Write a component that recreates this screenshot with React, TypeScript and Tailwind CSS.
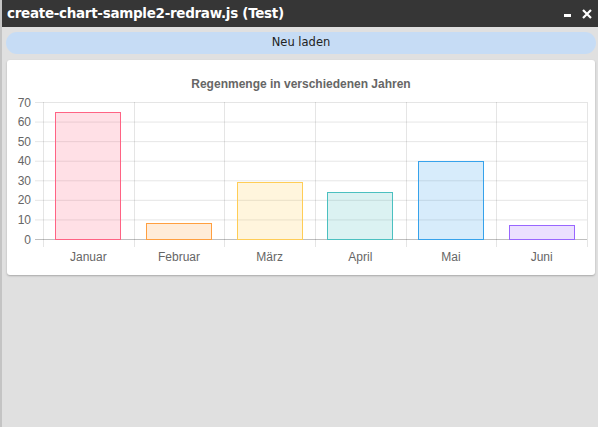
import React from "react";

const data = [
  { label: "Januar", value: 65, fill: "rgba(255,99,132,0.2)", stroke: "rgb(255,99,132)" },
  { label: "Februar", value: 8, fill: "rgba(255,159,64,0.2)", stroke: "rgb(255,159,64)" },
  { label: "März", value: 29, fill: "rgba(255,205,86,0.2)", stroke: "rgb(255,205,86)" },
  { label: "April", value: 24, fill: "rgba(75,192,192,0.2)", stroke: "rgb(75,192,192)" },
  { label: "Mai", value: 40, fill: "rgba(54,162,235,0.2)", stroke: "rgb(54,162,235)" },
  { label: "Juni", value: 7, fill: "rgba(153,102,255,0.2)", stroke: "rgb(153,102,255)" },
];

const LEFT = 36;
const RIGHT = 580;
const TOP = 42;
const BOTTOM = 179;
const MAX = 70;

const BarChart = () => {
  const cat = (RIGHT - LEFT) / data.length;
  const yOf = (v: number) => BOTTOM - (v / MAX) * (BOTTOM - TOP);
  const ticks = [0, 10, 20, 30, 40, 50, 60, 70];
  const barW = cat * 0.72;

  return (
    <svg width="588" height="215" className="block" style={{ fontFamily: '"Liberation Sans", Arial, sans-serif' }}>
      <text x="294" y="28" textAnchor="middle" fontSize="12" fontWeight="bold" fill="#666">
        Regenmenge in verschiedenen Jahren
      </text>

      {/* horizontal grid */}
      {ticks.map((t) => (
        <g key={t}>
          <line
            x1={LEFT - 8}
            x2={RIGHT}
            y1={yOf(t) + 0.5}
            y2={yOf(t) + 0.5}
            stroke={t === 0 ? "rgba(0,0,0,0.25)" : "rgba(0,0,0,0.1)"}
          />
          <text x={LEFT - 12} y={yOf(t) + 4.5} textAnchor="end" fontSize="12" fill="#666">
            {t}
          </text>
        </g>
      ))}

      {/* vertical grid */}
      {Array.from({ length: data.length + 1 }).map((_, i) => {
        const x = Math.round(LEFT + i * cat) + 0.5;
        return <line key={i} x1={x} x2={x} y1={TOP} y2={BOTTOM + 8} stroke="rgba(0,0,0,0.1)" />;
      })}

      {/* bars */}
      {data.map((d, i) => {
        const cx = LEFT + i * cat + cat / 2;
        const x = Math.floor(cx - barW / 2) + 0.5;
        const y = Math.round(yOf(d.value)) + 0.5;
        return (
          <g key={d.label}>
            <rect x={x} y={y} width={Math.round(barW)} height={BOTTOM - y + 0.5} fill={d.fill} stroke={d.stroke} />
            <text x={cx} y={201} textAnchor="middle" fontSize="12" fill="#666">
              {d.label}
            </text>
          </g>
        );
      })}
    </svg>
  );
};

export default function App() {
  return (
    <div className="w-[598px] h-[427px] bg-[#e0e0e0] flex flex-col border-l-2 border-[#c4c4c4] overflow-hidden">
      {/* title bar */}
      <div className="h-[27px] bg-[#363636] flex items-center justify-between pl-[7px] pr-[6px] -ml-[2px]">
        <span className="text-white font-bold text-[13.5px] font-['DejaVu_Sans',sans-serif] tracking-[-0.3px]">
          create-chart-sample2-redraw.js (Test)
        </span>
        <div className="flex items-center gap-[10px]">
          <svg width="8" height="8" viewBox="0 0 8 8">
            <rect x="0" y="4" width="7" height="3" fill="#fff" />
          </svg>
          <svg width="10" height="10" viewBox="0 0 10 10">
            <path d="M1 1 L9 9 M9 1 L1 9" stroke="#fff" strokeWidth="2.2" />
          </svg>
        </div>
      </div>

      <div className="flex flex-col pl-[4px] pr-[2px] pt-[5px]">
        <button
          type="button"
          className="h-[22px] w-full rounded-full bg-[#c6dcf5] text-[11.5px] text-[#222] font-['DejaVu_Sans',sans-serif]"
        >
          Neu laden
        </button>

        <div className="mt-[6px] ml-[1px] w-[588px] h-[215px] bg-white rounded-[3px] shadow-[0_1px_2px_rgba(0,0,0,0.25)]">
          <BarChart />
        </div>
      </div>
    </div>
  );
}
